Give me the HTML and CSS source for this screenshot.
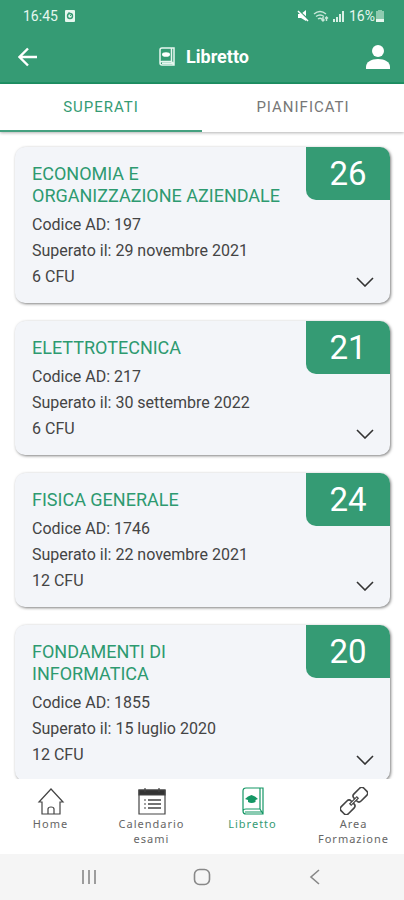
FILE: index.html
```
<!DOCTYPE html>
<html lang="it">
<head>
<meta charset="utf-8">
<meta name="viewport" content="width=device-width, initial-scale=1">
<title>Libretto</title>
<link rel="stylesheet" href="styles.css">
</head>
<body>
<header class="top">
  <div class="status">
    <span class="status-group">
      <span>16:45</span>
      <svg class="status-app" viewBox="0 0 12 12" width="12" height="12"><rect x="1" width="10" height="12" rx="1" fill="#e6f7ef"/><circle cx="6" cy="6" r="2.5" fill="none" stroke="#359b74" stroke-width="1.4"/><path d="M4 3h2M6 6l2-2" stroke="#359b74"/></svg>
    </span>
    <span class="status-group right">
      <svg viewBox="0 0 12 12" width="12" height="12"><path d="M1 4h3l5-4v11L4 8H1z" fill="#fff"/><path d="M1 0l12 11" stroke="#359b74" stroke-width="1.5"/><path d="M1 1l10 10" stroke="#fff" stroke-width="1.5"/></svg>
      <svg viewBox="0 0 16 12" width="16" height="12" fill="none" stroke="#c8e8da" stroke-width="1.4"><path d="M1 4q6-5 12 0M3 6.500q4-3 8 0M5 9q2-1.500 4 0M10 7v4M8.500 9.500L10 11l1.500-1.500M13.500 11V7M12 8.500L13.500 7 15 8.500"/></svg>
      <svg viewBox="0 0 12 12" width="12" height="12" fill="#d8f0e5"><path d="M0 9h2v3H0zM3 7h2v5H3zM6 4h2v8H6zM9 1h2v11H9z"/></svg>
      <span class="battery">16%<svg viewBox="0 0 8 12" width="8" height="12"><path d="M2 0h4v1h2v11H0V1h2z" fill="#8ecbb0"/><path d="M0 9h8v3H0z" fill="#e6f7ef"/></svg></span>
    </span>
  </div>
  <div class="appbar">
    <button class="icon-btn" aria-label="Indietro"><svg viewBox="0 0 20 20" width="20" height="20" fill="none" stroke="#fff" stroke-width="2.4"><path d="M19 10H2M10 1.500L1.500 10l8.500 8.500"/></svg></button>
    <h1><svg viewBox="0 0 16 20" width="16" height="20" fill="none" stroke="#e6f7ef" stroke-width="1.5"><path d="M1 3q0-2 2-2h12v17H3q-2 0-2-2zM1 16q0-1.500 2-1.500h9.500V1M12.500 14.500L15 18M3 16.300h10"/><ellipse cx="7" cy="7.500" rx="4" ry="2.300" fill="#fff" stroke="none"/></svg>Libretto</h1>
    <button class="icon-btn" aria-label="Profilo"><svg viewBox="0 0 24 26" width="24" height="26" fill="#fff"><circle cx="12" cy="7" r="6"/><path d="M0 25v-2c0-5 5-8 12-8s12 3 12 8v2z"/></svg></button>
  </div>
</header>
<div class="tabs" role="tablist">
  <button class="tab active" role="tab" aria-selected="true">SUPERATI</button>
  <button class="tab" role="tab" aria-selected="false">PIANIFICATI</button>
</div>
<main class="list">
  <article class="card">
    <div class="info"><h2>ECONOMIA E ORGANIZZAZIONE AZIENDALE</h2><p>Codice AD: 197</p><p>Superato il: 29 novembre 2021</p><p>6 CFU</p></div>
    <div class="side"><span class="grade">26</span><button class="expand" aria-label="Espandi"><svg viewBox="0 0 18 10" width="18" height="10"><path d="M1 1l8 8 8-8"/></svg></button></div>
  </article>
  <article class="card">
    <div class="info"><h2>ELETTROTECNICA</h2><p>Codice AD: 217</p><p>Superato il: 30 settembre 2022</p><p>6 CFU</p></div>
    <div class="side"><span class="grade">21</span><button class="expand" aria-label="Espandi"><svg viewBox="0 0 18 10" width="18" height="10"><path d="M1 1l8 8 8-8"/></svg></button></div>
  </article>
  <article class="card">
    <div class="info"><h2>FISICA GENERALE</h2><p>Codice AD: 1746</p><p>Superato il: 22 novembre 2021</p><p>12 CFU</p></div>
    <div class="side"><span class="grade">24</span><button class="expand" aria-label="Espandi"><svg viewBox="0 0 18 10" width="18" height="10"><path d="M1 1l8 8 8-8"/></svg></button></div>
  </article>
  <article class="card">
    <div class="info"><h2>FONDAMENTI DI INFORMATICA</h2><p>Codice AD: 1855</p><p>Superato il: 15 luglio 2020</p><p>12 CFU</p></div>
    <div class="side"><span class="grade">20</span><button class="expand" aria-label="Espandi"><svg viewBox="0 0 18 10" width="18" height="10"><path d="M1 1l8 8 8-8"/></svg></button></div>
  </article>
</main>
<nav class="bottom">
  <a href="#home"><svg viewBox="0 0 28 28" width="28" height="28"><path d="M2 15L14 2l12 13h-3v12H5V15zM11 27v-5q0-2 3-2t3 2v5"/></svg>Home</a>
  <a href="#calendario"><svg viewBox="0 0 28 28" width="28" height="28"><path d="M1 3h26v24H1z"/><path d="M1 3h26v5H1z" fill="#333"/><path d="M7 1v4M21 1v4M6 13h2M6 17h2M6 21h2"/><path d="M10 13h13M10 17h13M10 21h13" stroke-width="1.500"/></svg>Calendario esami</a>
  <a href="#libretto" class="current"><svg viewBox="0 0 28 28" width="28" height="28"><path d="M4 4q0-3 3-3h17v26H7q-3 0-3-3zM4 24q0-2 3-2h14V1M21 22l3 5M6 25h17"/><path d="M6 12l3-2.500 3.500-1.500L16 9.500l3 2.500-2.500 1v2q-4 2-7.500 0v-2z" fill="#159765" stroke="none"/></svg>Libretto</a>
  <a href="#area"><svg viewBox="0 0 28 28" width="28" height="28"><g transform="rotate(-45 14 14)" stroke-width="1.600"><rect x="-2" y="9" width="14" height="10" rx="3"/><rect x="16" y="9" width="14" height="10" rx="3"/><path d="M9 13h10v2H9z" fill="#fff" stroke-width="1.200"/></g></svg>Area Formazione</a>
</nav>
<div class="system">
  <button aria-label="Recenti"><svg viewBox="0 0 16 16" width="16" height="16"><path d="M2 1v14M8 1v14M14 1v14"/></svg></button>
  <button aria-label="Inizio"><svg viewBox="0 0 18 18" width="18" height="18"><rect x="1.500" y="1.500" width="15" height="15" rx="5"/></svg></button>
  <button aria-label="Indietro"><svg viewBox="0 0 16 16" width="16" height="16"><path d="M12 1L4 8l8 7"/></svg></button>
</div>
</body>
</html>
```
FILE: styles.css
```
* { box-sizing: border-box; }
body {
  margin: 0;
  height: 100vh;
  display: flex;
  flex-direction: column;
  background: #fff;
  color: #444;
  font-family: Roboto, sans-serif;
}
button {
  margin: 0;
  padding: 0;
  border: 0;
  background: none;
  font: inherit;
  color: inherit;
}
svg { display: block; flex: none; }
h1, h2, p { margin: 0; font-weight: 400; }

.top {
  flex: none;
  background: #359b74;
  border-bottom: 2px solid #1f9366;
  color: #fff;
}
.status {
  height: 31px;
  padding: 0 20px 0 23px;
  display: flex;
  align-items: center;
  justify-content: space-between;
  font-size: 14px;
  color: #e6f7ef;
}
.status-group { display: flex; align-items: center; gap: 6px; }
.status-group.right { gap: 4px; }
.battery { display: flex; align-items: center; gap: 1px; }
.appbar {
  height: 51px;
  padding: 0 14px 0 18px;
  display: grid;
  grid-template-columns: 24px 1fr 24px;
  align-items: center;
}
.appbar h1 {
  display: flex;
  align-items: center;
  justify-content: center;
  gap: 11px;
  font-size: 18px;
  font-weight: 700;
}

.tabs {
  flex: none;
  height: 48px;
  display: grid;
  grid-template-columns: 1fr 1fr;
  box-shadow: 0 1px 3px rgba(0, 0, 0, 0.3);
}
.tab {
  border-bottom: 2px solid transparent;
  font-size: 15px;
  letter-spacing: 1px;
  color: #777;
}
.tab.active { color: #359b74; border-bottom-color: #45a180; }

.list {
  flex: 1;
  min-height: 0;
  overflow: hidden;
  padding: 15px 14px 0 15px;
  display: flex;
  flex-direction: column;
  gap: 18px;
}
.card {
  flex: none;
  display: grid;
  grid-template-columns: 1fr 84px;
  background: #f3f5f9;
  border-radius: 10px;
  overflow: hidden;
  box-shadow: 1px 1px 3px rgba(0, 0, 0, 0.5);
}
.info { padding: 16px 20px 13px 17px; }
.info h2 {
  margin-bottom: 5px;
  font-size: 18px;
  line-height: 22px;
  color: #2d9a70;
}
.info p { font-size: 16px; line-height: 26px; }
.side {
  display: flex;
  flex-direction: column;
  justify-content: space-between;
}
.grade {
  height: 53px;
  display: flex;
  align-items: center;
  justify-content: center;
  background: #359b74;
  border-bottom-left-radius: 10px;
  color: #fff;
  font-size: 33px;
}
.expand { align-self: flex-end; padding: 0 16px 16px; }
.expand svg { fill: none; stroke: #333; stroke-width: 1.6; }

.bottom {
  flex: none;
  height: 75px;
  padding-top: 8px;
  display: grid;
  grid-template-columns: repeat(4, 1fr);
  background: #fff;
}
.bottom a {
  display: flex;
  flex-direction: column;
  align-items: center;
  gap: 1px;
  font-family: "Noto Sans", sans-serif;
  font-size: 11px;
  line-height: 15px;
  letter-spacing: 1px;
  text-align: center;
  text-decoration: none;
  color: #666;
}
.bottom svg { fill: none; stroke: #444; stroke-width: 1.2; }
.bottom .current { color: #359b74; }
.bottom .current svg { stroke: #159765; }

.system {
  flex: none;
  height: 46px;
  padding: 0 32px;
  display: grid;
  grid-template-columns: repeat(3, 1fr);
  place-items: center;
  background: #f5f5f5;
}
.system svg { fill: none; stroke: #888; stroke-width: 1.6; }
```
